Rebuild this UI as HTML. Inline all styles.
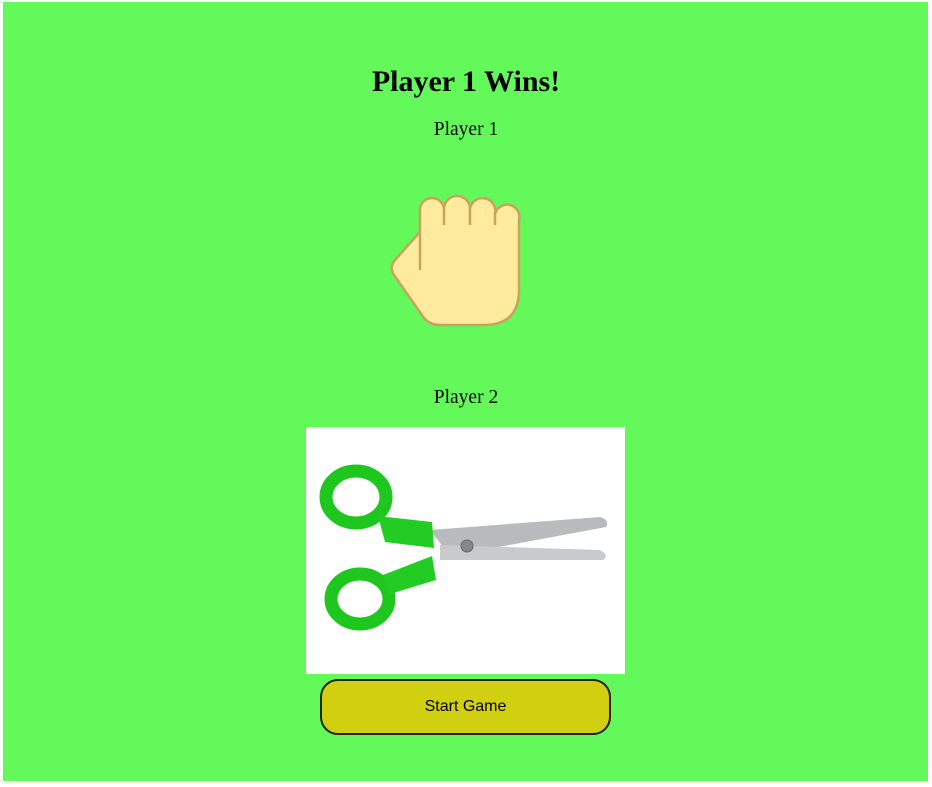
<!DOCTYPE html>
<html><head><style>
html,body{margin:0;padding:0;background:#fff;width:932px;height:787px;overflow:hidden}
#g{position:absolute;left:3px;top:2px;width:925px;height:779px;background:#64f95a}
.t{position:absolute;left:0;width:932px;text-align:center;font-family:"Liberation Serif",serif;color:#000}
h1{margin:0;font-size:30px;font-weight:bold}
#btn{position:absolute;left:320px;top:679px;width:287px;height:52px;background:#d0cf10;border:2px solid #222;border-radius:18px;font-family:"Liberation Sans",sans-serif;font-size:16px;text-align:center;line-height:52px;color:#000}
</style></head><body>
<div id="g"></div>
<div class="t" style="top:65px"><h1>Player 1 Wins!</h1></div>
<div class="t" style="top:119px;font-size:19.5px">Player 1</div>
<div class="t" style="top:387px;font-size:19.5px">Player 2</div>
<svg style="position:absolute;left:0;top:0" width="932" height="787">
<path d="M420 232 L420 210 A12 12 0 0 1 444 210 A13 13 0 0 1 470 208 A12.5 12.5 0 0 1 495 214 A12 12 0 0 1 519 220 L519 290 Q519 325 484 325 L440 325 Q430 325 424 318 L394 275 Q389 267 395 260 Z" fill="#feeb9e" stroke="#c9a35c" stroke-width="2.5" stroke-linejoin="round"/>
<path d="M444 210V225M470 208V225M495 214V225M420 232V270" stroke="#c9a35c" stroke-width="2.5" fill="none"/>
<rect x="306" y="427" width="319" height="247" fill="#fff"/>
<path d="M430 530 L600 517 Q610 520 606 527 L450 556 Z" fill="#b8babd"/>
<path d="M440 545 L600 550 Q610 555 603 560 L440 560 Z" fill="#c8cacc"/>
<circle cx="467" cy="546" r="6" fill="#888" stroke="#666"/>
<ellipse cx="356" cy="497" rx="30" ry="26" fill="none" stroke="#1ec61e" stroke-width="13"/>
<path d="M378 516 L432 522 L434 548 L385 542 Z" fill="#22cc22"/>
<ellipse cx="360" cy="599" rx="29" ry="25" fill="none" stroke="#1ec61e" stroke-width="13"/>
<path d="M383 575 L432 556 L436 580 L390 594 Z" fill="#22cc22"/>
</svg>
<div id="btn">Start Game</div>
</body></html>
